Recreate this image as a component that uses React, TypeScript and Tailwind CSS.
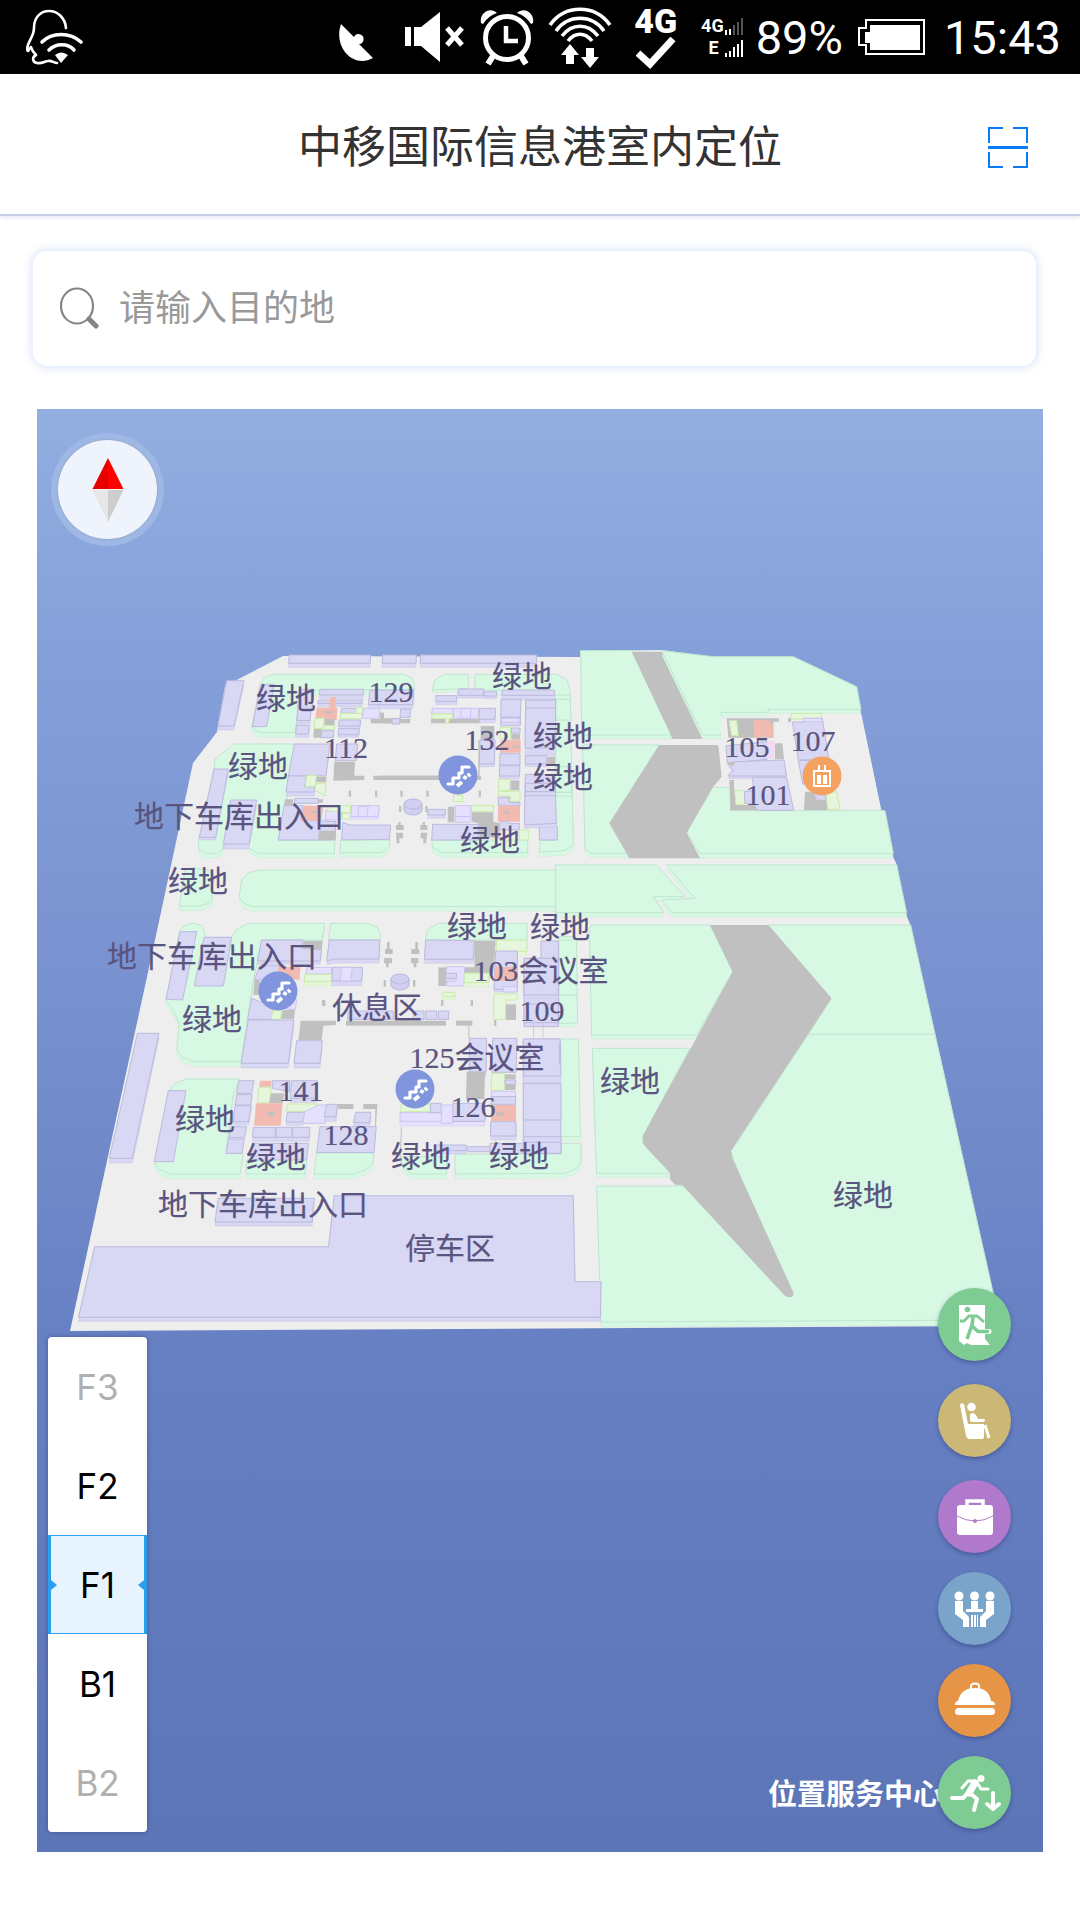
import React from "react";

type Kind = "g" | "p" | "r" | "l" | "v" | "k" | "e" | "m";
type Shape = [Kind, number, string];

const FILL: Record<Kind, string> = {
  g: "#d7f9e4",
  p: "#d8d7f4",
  r: "#f1bbb1",
  l: "#e6f6dc",
  v: "#e5e0fd",
  k: "#c0c0c0",
  e: "#eeeeee",
  m: "#f1daf2",
};
const EDGE: Record<Kind, string> = {
  g: "#bfe5cf",
  p: "#bcbade",
  r: "#f1bbb1",
  l: "#c8eda6",
  v: "#cbc4f2",
  k: "#c0c0c0",
  e: "#eeeeee",
  m: "#f1daf2",
};

const northWest: Shape[] = [
  ["p", 12, "688,45 932,45 930,70 686,70"],
  ["p", 12, "968,45 1069,45 1068,70 966,70"],
  ["p", 12, "1082,45 1430,45 1430,70 1080,70"],
  ["p", 12, "500,122 552,122 522,258 474,258"],
  ["g", 14, "575,262 602,130 615,112 640,103 1030,103 1055,113 1062,130 1062,150 770,150 740,150 720,160 706,278 600,278"],
  ["p", 0, "602,133 642,133 620,260 577,260"],
  ["p", 0, "718,148 762,148 756,205 712,205"],
  ["p", 10, "713,208 753,208 750,242 710,242"],
  ["p", 10, "709,256 748,256 746,282 707,282"],
  ["p", 10, "780,148 912,148 908,165 778,165"],
  ["p", 10, "775,180 908,180 905,190 773,190"],
  ["r", 0, "770,203 808,203 810,172 828,172 826,203 832,203 830,240 765,240"],
  ["k", 0, "795,213 815,213 815,221 795,221"],
  ["l", 0, "765,235 793,235 790,265 762,265"],
  ["k", 0, "793,237 824,237 824,257 793,257"],
  ["l", 0, "790,257 825,257 825,268 790,268"],
  ["k", 0, "762,267 785,267 783,293 760,293"],
  ["p", 0, "785,272 822,272 820,293 783,293"],
  ["p", 0, "845,205 890,205 888,220 843,220"],
  ["l", 0, "842,220 905,220 905,236 840,236"],
  ["l", 0, "890,203 910,203 908,220 888,220"],
  ["p", 8, "838,240 902,240 900,258 836,258"],
  ["p", 8, "836,266 898,266 896,284 834,284"],
  ["k", 0, "962,218 972,218 972,235 995,235 995,250 932,250 932,237 962,237"],
  ["p", 0, "995,235 1022,235 1020,250 995,250"],
  ["v", 0, "910,205 960,205 957,235 907,235"],
  ["p", 12, "930,150 1062,150 1058,194 925,194"],
  ["g", 14, "415,605 462,390 465,358 522,312 712,312 655,600 825,600 823,640 595,640 567,625 563,610 490,612 488,628 470,640 435,640 418,628"],
  ["p", 8, "462,387 505,387 467,592 418,592"],
  ["p", 15, "512,480 590,480 567,612 490,612"],
  ["p", 0, "703,312 810,312 798,408 685,408"],
  ["p", 12, "685,408 740,408 733,440 765,442 762,456 678,456"],
  ["l", 0, "740,407 770,407 765,440 735,440"],
  ["k", 0, "770,410 800,410 798,427 768,427"],
  ["l", 0, "768,430 798,430 795,468 765,450"],
  ["k", 0, "675,478 700,478 698,495 672,495"],
  ["p", 0, "705,475 775,475 775,490 703,490"],
  ["k", 0, "775,478 790,478 788,488 775,488"],
  ["p", 0, "672,497 730,497 722,540 828,545 825,600 655,600"],
  ["r", 0, "730,497 790,497 785,542 722,542"],
  ["k", 0, "755,513 772,513 772,520 755,520"],
  ["k", 0, "777,572 828,572 826,600 774,600"],
  ["v", 0, "798,510 845,510 843,540 795,540"],
  ["l", 0, "805,497 872,497 870,520 803,512"],
  ["l", 0, "848,520 872,520 870,537 845,537"],
  ["v", 8, "875,497 958,497 955,530 872,530"],
  ["v", 0, "897,500 925,500 920,530 894,530"],
  ["g", 14, "842,600 990,600 988,620 965,638 840,638"],
  ["p", 0, "848,547 870,555 992,555 988,598 845,600"],
  ["p", 0, "830,312 894,312 888,362 826,362"],
  ["k", 0, "823,365 885,365 883,407 913,407 913,420 820,422"],
  ["k", 0, "940,407 1262,407 1262,420 940,420"],
  ["k", 0, "866,452 873,452 873,470 866,470"],
  ["k", 0, "945,452 952,452 952,470 945,470"],
  ["g", 14, "538,770 545,720 565,698 600,690 1488,690 1488,800 575,800 548,788"],
  ["g", 14, "358,798 375,690 400,683 445,690 460,705 456,780 440,792 415,798"],
];

const northMid: Shape[] = [
  ["g", 8, "157,150 165,120 190,103 265,103 265,145"],
  ["g", 14, "285,103 530,103 560,118 570,150 580,615 555,632 478,636 480,600 525,600 525,165 365,150 285,150"],
  ["g", 0, "526,165 571,165 571,178 526,178"],
  ["g", 0, "526,178 571,178 573,240 526,240"],
  ["g", 0, "526,380 574,380 575,457 526,457"],
  ["g", 0, "526,457 576,457 576,468 526,468"],
  ["p", 8, "235,147 312,147 310,166 234,166"],
  ["p", 8, "312,155 350,155 350,168 312,168"],
  ["p", 10, "168,167 230,167 230,184 168,184"],
  ["v", 0, "157,205 220,205 218,222 155,222"],
  ["l", 0, "157,222 218,222 216,236 155,236"],
  ["v", 0, "222,205 295,205 293,235 220,235"],
  ["v", 0, "243,205 272,205 272,235 243,235"],
  ["k", 0, "153,237 302,237 302,250 153,250"],
  ["l", 0, "196,236 208,236 205,250 198,250"],
  ["p", 10, "298,205 347,205 345,238 298,238"],
  ["k", 0, "302,258 343,258 343,300 302,300"],
  ["k", 0, "295,300 299,300 299,407 295,407"],
  ["p", 8, "300,300 345,300 343,372 298,372"],
  ["k", 0, "0,407 303,407 303,420 0,420"],
  ["p", 14, "367,150 523,150 523,166 365,166"],
  ["p", 0, "363,178 423,178 421,232 362,232"],
  ["p", 0, "363,232 421,232 421,257 362,257"],
  ["v", 0, "364,235 418,235 418,247 364,247"],
  ["l", 0, "360,262 392,262 392,295 360,295"],
  ["p", 0, "394,264 420,264 420,279 394,279"],
  ["k", 0, "394,281 420,281 420,299 394,299"],
  ["r", 0, "362,300 422,300 422,338 360,338"],
  ["k", 0, "398,317 418,317 418,323 398,323"],
  ["p", 0, "360,341 420,341 420,375 359,375"],
  ["p", 8, "359,377 420,377 418,408 358,408"],
  ["l", 0, "357,418 390,418 388,452 355,452"],
  ["k", 0, "392,421 418,421 418,451 392,451"],
  ["l", 0, "356,454 420,454 420,484 390,484 390,468 356,468"],
  ["p", 0, "355,472 388,472 388,487 420,487 420,496 355,496"],
  ["r", 0, "355,497 420,497 420,545 353,545"],
  ["k", 0, "370,514 388,514 388,521 370,521"],
  ["p", 22, "437,180 527,180 527,324 435,324"],
  ["p", 0, "437,180 527,180 527,204 437,204"],
  ["p", 8, "436,347 500,347 500,372 436,372"],
  ["k", 0, "502,350 526,350 526,373 502,373"],
  ["e", 0, "434,383 524,383 524,402 434,402"],
  ["p", 0, "478,558 532,558 532,600 478,600"],
  ["p", 10, "436,403 525,405 529,550 433,555"],
  ["p", 0, "436,430 526,430 526,455 436,455"],
  ["p", 0, "436,455 527,455 527,467 435,467"],
  ["l", 0, "220,465 248,465 248,485 220,485"],
  ["p", 10, "143,508 197,508 195,525 143,525"],
  ["k", 0, "203,500 223,500 223,547 203,547"],
  ["v", 0, "226,497 273,497 272,530 226,530"],
  ["v", 0, "226,530 273,530 272,547 226,547"],
  ["l", 0, "275,497 341,497 340,515 275,515"],
  ["k", 0, "275,517 340,517 340,545 358,550 358,595 300,590 295,550 275,545"],
  ["p", 0, "360,547 375,543 390,550 418,550 418,570 358,570"],
  ["g", 14, "155,600 443,600 443,638 185,638 158,622"],
  ["l", 0, "418,570 445,570 445,600 418,600"],
  ["p", 0, "158,553 295,553 295,600 155,600"],
  ["k", 0, "300,550 350,550 352,592 298,590"],
  ["k", 0, "55,546 62,546 62,555 71,555 71,570 48,570 48,555 55,555"],
  ["k", 0, "48,578 69,578 69,595 58,595 58,610 50,610"],
  ["k", 0, "128,546 135,546 135,555 142,555 142,570 121,570 121,555 128,555"],
  ["k", 0, "122,578 142,578 138,610 130,610 130,595 122,595"],
  ["k", 0, "61,452 68,452 68,470 61,470"],
  ["k", 0, "139,452 146,452 146,470 139,470"],
  ["k", 0, "296,452 303,452 303,470 296,470"],
  ["k", 0, "57,498 64,498 64,516 57,516"],
  ["k", 0, "136,498 143,498 143,516 136,516"],
  ["p", 0, "62,207 92,207 90,232 60,232"],
  ["p", 0, "36,236 60,236 58,252 36,252"],
  ["k", 0, "0,218 12,218 12,237 35,237 35,250 0,250"],
  ["k", 0, "60,237 92,237 90,250 60,250"],
  ["g", 12, "602,32 755,32 878,285 605,285"],
  ["k", 0, "755,35 845,35 968,297 878,297"],
  ["g", 12, "608,315 838,315 690,550 748,640 630,640 615,625"],
  ["g", 14, "527,675 830,675 915,770 820,770 852,818 527,818"],
];

const northEast: Shape[] = [
  ["g", 12, "5,32 160,50 400,50 590,140 603,208 325,208 325,217 183,217 190,285 128,285"],
  ["e", 0, "183,230 326,230 326,222 604,222 664,511 190,511"],
  ["g", 14, "155,442 212,442 212,512 675,512 700,640 120,640 80,578"],
  ["k", 0, "-2,315 175,315 185,410 160,440 80,578 120,655 -92,655 -152,550"],
  ["g", 14, "20,675 710,675 740,818 37,818 5,780 105,775"],
  ["k", 0, "200,235 357,235 357,245 340,245 340,293 205,293"],
  ["l", 0, "207,242 230,242 235,287 215,287"],
  ["r", 0, "280,240 325,240 340,260 340,292 283,292"],
  ["p", 0, "198,317 325,305 322,358 202,370"],
  ["p", 8, "205,370 230,365 372,360 380,408 203,408 220,390"],
  ["k", 0, "203,368 222,366 224,376 203,376"],
  ["m", 0, "322,305 342,305 342,355 322,355"],
  ["k", 0, "345,310 367,310 372,358 345,358"],
  ["k", 0, "208,420 222,420 228,495 290,495 290,511 211,511"],
  ["e", 0, "222,422 275,422 275,448 222,448"],
  ["l", 0, "224,452 252,452 255,493 228,493"],
  ["p", 0, "278,412 380,412 401,511 290,511 285,493 255,490 253,454 280,452"],
  ["l", 0, "393,220 485,220 485,237 393,237"],
  ["k", 0, "384,234 393,234 393,246 384,246"],
  ["p", 0, "397,246 430,246 430,235 487,235 507,358 415,360"],
  ["p", 0, "415,362 508,360 515,430 428,432"],
  ["v", 0, "430,235 485,235 487,245 430,245"],
  ["k", 0, "435,455 458,455 470,480 500,482 503,510 432,510"],
  ["p", 0, "458,460 495,465 498,482 475,480"],
  ["l", 0, "498,460 530,455 540,507 503,508"],
];

const southWest: Shape[] = [
  ["g", 14, "318,362 358,155 370,138 400,130 428,138 437,172 515,172 530,148 565,130 795,130 785,180 605,180 580,300 543,545 400,545 365,532 350,510 358,430 345,400"],
  ["g", 0, "812,130 925,130 955,145 962,165 960,180 805,180"],
  ["p", 0, "360,155 410,155 368,360 318,358"],
  ["p", 0, "432,172 515,172 490,318 403,318"],
  ["p", 10, "605,180 728,180 728,205 785,210 780,243 592,243"],
  ["k", 0, "730,182 788,182 785,210 730,205"],
  ["p", 0, "600,257 660,257 650,300 583,300"],
  ["r", 0, "655,260 722,260 718,300 650,290"],
  ["k", 0, "583,300 600,300 600,345 580,345"],
  ["v", 0, "680,362 710,358 706,388 680,388"],
  ["p", 0, "575,355 640,380 635,418 563,418"],
  ["l", 0, "638,392 665,392 660,418 633,418"],
  ["k", 0, "668,390 705,390 702,417 663,417"],
  ["p", 14, "565,420 702,420 685,550 543,550"],
  ["k", 0, "722,422 828,422 828,435 790,437 785,480 715,480"],
  ["p", 14, "710,482 787,482 780,550 702,550"],
  ["p", 12, "808,180 960,180 957,237 825,237 800,243"],
  ["v", 0, "740,262 815,262 815,282 738,282"],
  ["l", 12, "735,283 818,283 815,305 732,305"],
  ["p", 14, "818,262 908,262 905,303 815,303"],
  ["v", 0, "845,262 877,262 872,303 840,303"],
  ["k", 0, "786,360 796,360 796,378 786,378"],
  ["k", 0, "858,422 1158,422 1158,437 858,437"],
  ["p", 0, "865,393 1000,393 1000,418 862,418"],
  ["p", 0, "1060,393 1092,393 1092,418 1060,418"],
  ["p", 0, "1097,393 1130,393 1130,418 1097,418"],
  ["p", 0, "1135,393 1166,393 1166,418 1135,418"],
  ["p", 14, "232,460 297,460 217,835 148,835"],
  ["g", 14, "283,845 330,630 345,610 380,597 540,597 520,640 498,818 550,820 540,882 330,882 298,868"],
  ["p", 0, "325,632 378,632 340,845 283,845"],
  ["p", 0, "537,602 582,602 575,640 530,640"],
  ["p", 0, "530,644 577,644 572,675 525,675"],
  ["p", 10, "525,677 574,677 566,725 520,725"],
  ["p", 0, "513,740 560,740 553,773 506,773"],
  ["p", 0, "505,777 553,777 546,820 498,820"],
  ["r", 0, "600,602 635,602 633,620 597,620"],
  ["l", 0, "597,622 633,622 628,668 592,668"],
  ["p", 0, "637,602 690,602 688,635 637,625"],
  ["k", 0, "633,640 672,640 668,670 628,670"],
  ["r", 0, "588,670 668,670 662,737 582,737"],
  ["k", 0, "623,695 645,695 645,706 623,706"],
  ["p", 12, "695,602 772,602 768,655 690,655"],
  ["l", 0, "682,672 770,672 768,694 680,694"],
  ["p", 10, "682,697 735,697 728,726 678,726"],
  ["v", 0, "735,695 775,675 800,675 795,730 728,730"],
  ["p", 14, "800,673 832,673 828,710 793,710"],
  ["k", 0, "833,672 880,672 880,687 833,687"],
  ["k", 0, "910,672 952,672 948,740 945,740 946,687 910,687"],
  ["p", 12, "887,697 932,697 930,728 880,728"],
  ["g", 14, "560,840 740,835 735,882 558,882"],
  ["p", 12, "580,742 647,742 645,772 578,772"],
  ["p", 12, "649,742 697,742 695,772 647,772"],
  ["p", 12, "699,742 750,742 748,772 697,772"],
  ["p", 0, "578,790 745,790 740,840 570,840"],
  ["g", 14, "770,818 942,818 938,850 915,870 885,882 762,882"],
  ["p", 0, "780,740 949,740 942,818 770,818"],
];

const southMid: Shape[] = [
  ["g", 0, "135,180 145,148 175,130 442,130 440,180"],
  ["p", 12, "137,180 283,182 280,238 133,238"],
  ["l", 12, "350,180 442,180 440,215 350,215"],
  ["k", 0, "283,182 347,182 345,215 340,278 253,278 253,262 283,262"],
  ["p", 8, "347,213 412,213 412,328 342,328"],
  ["r", 0, "345,260 411,260 411,302 342,302"],
  ["k", 0, "175,262 198,262 198,318 175,318"],
  ["v", 0, "200,260 254,260 252,318 200,318"],
  ["p", 10, "197,280 230,280 228,295 197,295"],
  ["l", 12, "253,280 328,280 326,308 253,308"],
  ["v", 0, "370,320 411,320 411,336 370,336"],
  ["l", 0, "342,342 411,342 411,360 378,360 376,418 340,418"],
  ["k", 0, "378,373 408,373 408,420 378,420"],
  ["g", 10, "537,170 587,170 593,425 580,430 537,430"],
  ["g", 0, "537,180 589,180 592,345 537,345"],
  ["p", 0, "483,183 535,183 535,440 432,440 432,235 483,235"],
  ["p", 10, "432,235 535,235 535,345 432,345"],
  ["p", 0, "432,372 535,372 535,428 432,428"],
  ["l", 8, "187,337 224,337 224,350 187,350"],
  ["k", 0, "21,186 29,186 29,207 38,207 38,222 15,222 15,207 21,207"],
  ["k", 0, "12,234 36,234 36,250 26,250 26,262 18,262 18,250 12,250"],
  ["k", 0, "106,186 114,186 114,207 118,207 118,222 94,222 94,207 106,207"],
  ["k", 0, "93,234 115,234 115,250 109,250 109,262 101,262 101,250 93,250"],
  ["k", 0, "11,300 18,300 18,320 11,320"],
  ["k", 0, "99,300 106,300 106,320 99,320"],
  ["k", 0, "183,360 190,360 190,378 183,378"],
  ["k", 0, "272,360 279,360 279,378 272,378"],
  ["k", 0, "342,420 349,420 349,438 342,438"],
  ["k", 0, "228,422 277,422 277,437 228,437"],
  ["k", 0, "265,437 268,437 268,475 265,475"],
  ["k", 0, "459,430 461,430 461,473 459,473"],
  ["k", 0, "488,430 490,430 490,473 488,473"],
  ["p", 12, "268,475 320,475 318,576 268,576"],
  ["k", 0, "260,575 315,575 313,658 258,658"],
  ["p", 0, "338,475 411,475 408,577 336,577"],
  ["l", 0, "335,580 373,580 373,630 333,630"],
  ["k", 0, "375,583 407,583 407,598 375,598"],
  ["p", 0, "375,600 407,600 407,613 375,613"],
  ["k", 0, "375,614 407,614 407,630 375,630"],
  ["v", 0, "335,634 407,634 407,650 333,650"],
  ["p", 0, "335,650 407,650 407,673 333,673"],
  ["r", 0, "333,675 408,675 408,723 333,723"],
  ["k", 0, "350,697 372,697 372,707 350,707"],
  ["p", 12, "332,725 408,725 408,768 332,768"],
  ["g", 12, "540,477 595,477 601,770 540,770"],
  ["g", 14, "543,790 603,790 603,845 590,865 555,880 225,882 225,822 543,822"],
  ["g", 14, "62,830 200,830 200,882 95,882 70,865"],
  ["p", 10, "165,795 258,795 258,812 165,812"],
  ["p", 0, "262,800 330,800 330,815 262,815"],
  ["p", 0, "330,790 543,790 543,820 330,820"],
  ["p", 0, "430,477 540,477 543,820 430,820"],
  ["p", 22, "430,477 540,477 543,588 430,588"],
  ["p", 0, "430,610 543,610 543,720 430,720"],
  ["p", 0, "430,770 543,770 543,787 430,787"],
  ["p", 0, "538,497 542,497 542,553 538,553"],
  ["k", 0, "63,742 66,742 62,830 59,830"],
  ["l", 0, "64,672 150,672 150,695 62,695"],
  ["v", 14, "60,698 315,698 313,724 60,724"],
  ["p", 0, "152,670 184,670 184,698 152,698"],
  ["p", 0, "218,670 315,670 315,724 218,724"],
  ["v", 0, "184,675 218,675 218,730 184,730"],
];

const southEast: Shape[] = [
  ["g", 12, "88,85 94,75 450,75 518,215 410,405 95,405"],
  ["g", 0, "625,75 1052,75 1125,403 745,403 812,295"],
  ["g", 12, "97,445 390,445 248,710 330,820 110,820"],
  ["g", 15, "110,858 370,858 680,1188 512,755 745,403 1125,403 1318,1260 123,1266"],
  ["k", 0, "450,75 625,75 815,295 513,752 517,775 698,1172 701,1184 694,1191 683,1191 673,1186 368,856 345,854 330,838 330,818 260,745 248,728 248,708 518,215"],
];

const parking: Shape[] = [
  ["p", 12, "443,235 712,235 706,306 434,306"],
  ["p", 12, "97,380 752,380 768,227 1437,227 1442,485 1515,485 1513,592 52,592"],
];

function Blocks({ shapes, transform }: { shapes: Shape[]; transform: string }) {
  return (
    <g transform={transform} strokeWidth={3} strokeLinejoin="round">
      {shapes.map(([kind, depth, points], i) => (
        <g key={i} fill={FILL[kind]} stroke={EDGE[kind]}>
          {depth > 0 && (
            <g transform={`translate(0 ${depth})`} strokeWidth={1}>
              <polygon points={points} />
            </g>
          )}
          <polygon points={points} strokeWidth={kind === "k" || kind === "e" || kind === "r" ? 0 : 3} />
        </g>
      ))}
    </g>
  );
}

const labels: [string, number, number][] = [
  ["绿地", 286, 699],
  ["129", 391, 693],
  ["绿地", 522, 677],
  ["112", 346, 749],
  ["132", 487, 741],
  ["绿地", 563, 737],
  ["绿地", 563, 778],
  ["绿地", 258, 767],
  ["地下车库出入口", 239, 817],
  ["绿地", 490, 841],
  ["绿地", 198, 882],
  ["105", 747, 748],
  ["107", 813, 742],
  ["101", 768, 796],
  ["地下车库出入口", 212, 957],
  ["绿地", 212, 1020],
  ["141", 301, 1092],
  ["绿地", 205, 1120],
  ["128", 346, 1136],
  ["绿地", 276, 1158],
  ["绿地", 477, 927],
  ["绿地", 560, 928],
  ["103会议室", 541, 971],
  ["休息区", 377, 1008],
  ["109", 542, 1012],
  ["125会议室", 477, 1058],
  ["绿地", 630, 1082],
  ["126", 473, 1108],
  ["绿地", 421, 1157],
  ["绿地", 519, 1157],
  ["绿地", 863, 1196],
  ["地下车库出入口", 263, 1205],
  ["停车区", 450, 1249],
];

function StairsPin({ x, y }: { x: number; y: number }) {
  return (
    <g transform={`translate(${x} ${y})`}>
      <circle r="19.5" fill="#8195de" />
      <path
        d="M-10 9H-5V3H1V-2H4V-8H11"
        fill="none"
        stroke="#fff"
        strokeWidth="3.2"
        strokeLinecap="round"
        strokeLinejoin="round"
      />
      <path d="M-1 11L4 7M6 4L8 1M10 1L12 -1" fill="none" stroke="#fff" strokeWidth="4" />
    </g>
  );
}

function CampusMap() {
  return (
    <svg viewBox="37 409 1006 1443" className="block h-auto w-full" role="img" aria-label="室内地图">
      <defs>
        <linearGradient id="sky" x1="0" y1="0" x2="0" y2="1">
          <stop offset="0" stopColor="#93aee0" />
          <stop offset="0.17" stopColor="#84a0d9" />
          <stop offset="0.36" stopColor="#7b94d1" />
          <stop offset="0.65" stopColor="#6680c3" />
          <stop offset="1" stopColor="#5c75b7" />
        </linearGradient>
      </defs>
      <rect x="37" y="409" width="1006" height="1443" fill="url(#sky)" />
      <polygon
        fill="#eeeeee"
        points="283,656 580,657 580,651 662,650 713,657 793,657 857,687 861,715 881,810 885,812 893,857 897,865 907,917 910,924 935,1033 993,1293 999,1326 70,1331 155,940 193,763 217,732 225,686"
      />
      <Blocks shapes={northWest} transform="translate(60 640) scale(0.33333)" />
      <Blocks shapes={northMid} transform="translate(380 640) scale(0.33333)" />
      <Blocks shapes={northEast} transform="translate(660 640) scale(0.33333)" />
      <Blocks shapes={southWest} transform="translate(60 880) scale(0.33333)" />
      <Blocks shapes={southMid} transform="translate(380 880) scale(0.33333)" />
      <Blocks shapes={southEast} transform="translate(560 900) scale(0.33333)" />
      <Blocks shapes={parking} transform="translate(60 1120) scale(0.35714 0.33333)" />
      {[
        [413, 805],
        [400, 980],
      ].map(([x, y]) => (
        <g key={y} fill="#d0cff0" stroke="#b9b7de">
          <path d={`M${x - 9} ${y - 1}v6a9 5 0 0 0 18 0v-6z`} />
          <ellipse cx={x} cy={y - 1} rx="9" ry="5" />
        </g>
      ))}
      <g
        textAnchor="middle"
        fontSize="30"
        fill="#5a5480"
        stroke="#5a5480"
        strokeWidth="0.2"
        className="font-['Liberation_Serif','Noto_Sans_CJK_SC',serif]"
      >
        {labels.map(([text, x, y], i) => (
          <text key={i} x={x} y={y + (/^\d+$/.test(text) ? 9 : 10)}>
            {text}
          </text>
        ))}
      </g>
      <StairsPin x={458} y={775} />
      <StairsPin x={278} y={991} />
      <StairsPin x={415} y={1089} />
      <g transform="translate(822 776)">
        <circle r="19.5" fill="#f3a25f" />
        <g fill="none" stroke="#fff" strokeWidth="2">
          <rect x="-8" y="-5" width="16" height="15" />
          <path d="M-3 -11v5M3 -11v5" />
          <path d="M-3 -1v9M3 -1v9" strokeWidth="4" />
        </g>
      </g>
      <text
        x="768"
        y="1805"
        fontSize="29"
        fontWeight="700"
        fill="#fff"
        className="font-['Noto_Sans_CJK_SC',sans-serif]"
      >
        位置服务中心
      </text>
    </svg>
  );
}

function StatusBar() {
  return (
    <div className="flex h-[74px] items-center bg-black pr-[19px] pl-[26px] font-['Roboto',sans-serif] text-white">
      <svg width="58" height="56" viewBox="0 0 58 56" fill="none" stroke="#fff" strokeWidth="2.6" strokeLinecap="round" strokeLinejoin="round">
        <path d="M40 19C39 9 32 2 23 2C14 2 8 9 8 19C8 26 4 30 2 36C1 39 1 42 2 42L5 38C6 42 8 44 10 46C6 48 6 53 11 54C16 55 19 52 22 52C25 51 28 54 31 54" />
        <path d="M16 33C26 23 44 23 55 33M23 41C30 34 42 34 48 41" strokeWidth="3.6" />
        <path d="M29 46Q35 41 42 46L35 54Z" fill="#fff" stroke="none" />
      </svg>
      <div className="ml-auto flex items-center">
        <svg width="38" height="60" viewBox="0 0 38 60" fill="#fff">
          <path d="M4 17C-4 40 16 62 36 51L22 37A5 5 0 1 0 17 30Z" />
        </svg>
        <svg className="ml-[29px]" width="62" height="60" viewBox="0 0 62 60" fill="#fff">
          <path d="M1 20h6v19H1zM10 20h7L36 5v50L17 39h-7z" />
          <path d="M43 21l15 17M58 21L43 38" stroke="#fff" strokeWidth="5" />
        </svg>
        <svg className="ml-[13px]" width="56" height="60" viewBox="0 0 56 60" fill="none" stroke="#fff">
          <circle cx="28" cy="31" r="21.5" strokeWidth="5" />
          <path d="M27 19v15h12" strokeWidth="4.5" />
          <path d="M14 49l-5 8M42 49l5 8" strokeWidth="6" />
          <path d="M2 16C0 6 11 -1 18 6Q9 9 4 17ZM54 16C56 6 45 -1 38 6Q47 9 52 17Z" fill="#fff" stroke="none" />
        </svg>
        <svg className="ml-[13px]" width="64" height="62" viewBox="0 0 64 62" fill="none" stroke="#fff" strokeWidth="3.6">
          <path d="M2 19C17 -2 47 -2 62 19M8 25C20 8 44 8 56 25M14 30C24 17 40 17 50 30M20 35C27 26 37 26 44 35" />
          <path d="M22 38l9 11h-5v9h-8v-9h-5zM42 62l-9-11h5v-9h8v9h5z" fill="#fff" stroke="none" />
        </svg>
        <div className="ml-[22px] flex flex-col items-center">
          <span className="text-[34px] leading-[31px] font-black">4G</span>
          <svg width="40" height="32" viewBox="0 0 40 32" fill="none" stroke="#fff" strokeWidth="7">
            <path d="M2 16L14 27L37 2" />
          </svg>
        </div>
        <div className="ml-[24px] flex flex-col items-end gap-[2px] text-[18px] leading-[20px] font-bold">
          <div className="flex items-center">
            <span>4G</span>
            <svg width="20" height="17" viewBox="0 0 20 17">
              <path d="M1 12h2v5h-2zM5 11h2v6h-2z" fill="#fff" />
              <path d="M9 7h2v10h-2zM13 4h2v13h-2zM17 0h2v17h-2z" fill="#555" />
            </svg>
          </div>
          <div className="flex items-center gap-[5px]">
            <span>E</span>
            <svg width="20" height="17" viewBox="0 0 20 17" fill="#fff">
              <path d="M1 13h2v4h-2zM5 11h2v6h-2zM9 7h2v10h-2zM13 4h2v13h-2zM17 0h2v17h-2z" />
            </svg>
          </div>
        </div>
        <span className="ml-[12px] pt-[2px] text-[47px] leading-[56px]">89%</span>
        <svg className="ml-[15px]" width="68" height="36" viewBox="0 0 68 36">
          <path d="M8 1h58v34H8v-9H1V9h7z" fill="none" stroke="#fff" strokeWidth="2" />
          <path d="M12 6h50v25H12v-7H7V13h5z" fill="#fff" />
        </svg>
        <span className="ml-[18px] pt-[2px] text-[47px] leading-[56px]">15:43</span>
      </div>
    </div>
  );
}

const facilities: { label: string; style: string; icon: React.ReactNode }[] = [
  {
    label: "安全出口",
    style: "bg-[#7ecb94]",
    icon: (
      <>
        <path d="M21 17H47V51L52 57H33L29 55 26 57 21 53Z" fill="#fff" />
        <path d="M38 43.500H51" stroke="#fff" strokeWidth="5" strokeLinecap="round" />
        <circle cx="29.500" cy="21.500" r="2.800" fill="#7ecb94" />
        <path d="M22 33H26L31 28H39L46 34" fill="none" stroke="#7ecb94" strokeWidth="2.800" />
        <path d="M35 29L34 38L40 43.500H51M34 37L29 51" fill="none" stroke="#7ecb94" strokeWidth="3.600" />
      </>
    ),
  },
  {
    label: "休息座椅",
    style: "bg-[#cbb877]",
    icon: (
      <g fill="#fff">
        <circle cx="33.500" cy="23" r="4.300" />
        <path d="M22 21Q23 18 26 20L30 40H46V53Q46 55 44 55H31Q29 55 28 52Z" />
        <path d="M32 37V31Q34 27 38 31L40 35H46Q48 36 46 38L34 38Z" />
        <path d="M47 41L51 54" stroke="#fff" strokeWidth="3" />
      </g>
    ),
  },
  {
    label: "办公区",
    style: "bg-[#b079cc]",
    icon: (
      <>
        <path d="M29 27V21H45V27" fill="none" stroke="#fff" strokeWidth="3.500" />
        <rect x="19" y="25" width="36" height="30" rx="3" fill="#fff" />
        <path d="M19 36Q37 46 55 36" fill="none" stroke="#b079cc" />
        <circle cx="37" cy="41" r="2" fill="#b079cc" />
      </>
    ),
  },
  {
    label: "会议室",
    style: "bg-[#7ba4cb]",
    icon: (
      <g fill="#fff">
        <circle cx="21" cy="24" r="4.500" />
        <circle cx="36.500" cy="24" r="4.500" />
        <circle cx="52" cy="24" r="4.500" />
        <path d="M17 29H25V39L31 45V55H25V48L17 42ZM56 29H48V39L42 45V55H48V48L56 42ZM33 29h7v8h5v3H28v-3h5zM33 43h2v12h-2zM36 43h2v12h-2zM39 43h1v12h-1z" />
      </g>
    ),
  },
  {
    label: "餐厅",
    style: "bg-[#e69547]",
    icon: (
      <g fill="#fff">
        <path d="M33 25V22Q33 19.500 37 19.500T41 22V25" fill="none" stroke="#fff" strokeWidth="2" />
        <path d="M20 37Q23 24 37 24T53 37Q57 37 57 41H17Q17 37 20 37Z" />
        <rect x="17" y="44" width="40" height="7" rx="3.500" />
      </g>
    ),
  },
  {
    label: "疏散路线",
    style: "bg-[#7ecb94]",
    icon: (
      <g fill="none" stroke="#fff" strokeLinecap="round" strokeLinejoin="round">
        <circle cx="43" cy="22.500" r="3.500" fill="#fff" stroke="none" />
        <path d="M24 32L30 25H38L43 33H50" strokeWidth="3" />
        <path d="M37 27L31 37" strokeWidth="7" />
        <path d="M30 37L25 42H14M33 38L39 43L36 54" strokeWidth="4" />
        <path d="M55 37V53M49 48L55 53L61 48" strokeWidth="4" />
      </g>
    ),
  },
];

function FacilityButton({ index }: { index: number }) {
  const { label, style, icon } = facilities[index];
  return (
    <button
      type="button"
      aria-label={label}
      className={`size-[73px] rounded-full shadow-[0_2px_4px_rgba(40,50,110,0.45)] ${style}`}
    >
      <svg viewBox="0 0 73 73" className="size-full">
        {icon}
      </svg>
    </button>
  );
}

const floors = [
  { name: "F3", look: "text-[#b0b0b0]" },
  { name: "F2", look: "text-black" },
  { name: "F1", look: "border-x-[3px] border-y border-[#2b9fee] bg-[#e8f4fd] text-black" },
  { name: "B1", look: "text-black" },
  { name: "B2", look: "text-[#b0b0b0]" },
];

export default function App() {
  return (
    <div className="min-h-screen bg-white pb-[68px] font-['Noto_Sans_CJK_SC',sans-serif]">
      <StatusBar />
      <header className="grid h-[142px] grid-cols-[1fr_auto_1fr] items-center border-b-2 border-[#c9cde3] px-[52px] shadow-[0_2px_4px_rgba(180,185,215,0.3)]">
        <h1 className="col-start-2 text-[44px] leading-[60px] text-[#333333]">中移国际信息港室内定位</h1>
        <button type="button" aria-label="扫一扫" className="mt-[6px] justify-self-end">
          <svg width="40" height="41" viewBox="0 0 40 41" fill="none" stroke="#087cf6" strokeWidth="2">
            <path d="M15 1H1V16M25 1H39V16M15 40H1V25M25 40H39V25" />
            <path d="M0 20.500H40" strokeWidth="3" />
          </svg>
        </button>
      </header>

      <main>
        <div className="mt-[35px] mr-[44px] ml-[33px] flex h-[115px] items-center gap-[20px] rounded-[14px] bg-white px-[27px] pb-[2px] shadow-[0_0_8px_2px_rgba(205,222,245,0.75)]">
          <svg width="39" height="42" viewBox="0 0 39 42" fill="none" stroke="#858585" className="shrink-0">
            <ellipse cx="17" cy="19" rx="16" ry="17.500" strokeWidth="2.200" />
            <path d="M29 32L36 39" strokeWidth="5" strokeLinecap="round" />
          </svg>
          <input
            type="text"
            aria-label="目的地"
            placeholder="请输入目的地"
            className="min-w-0 flex-1 bg-transparent pb-[6px] text-[36px] leading-[52px] text-[#333333] outline-none placeholder:text-[#999999]"
          />
        </div>

        <section className="relative mx-[37px] mt-[43px]">
          <CampusMap />

          <button
            type="button"
            aria-label="指北针"
            className="absolute top-[24px] left-[14px] flex size-[113px] items-center justify-center rounded-full bg-[#9fb7e5]"
          >
            <span className="flex size-[99px] items-center justify-center rounded-full bg-[#eff4fc] shadow-[0_0_2px_#8b93ad]">
              <svg width="32" height="64" viewBox="0 0 32 66">
                <path d="M16 0L0 32H16Z" fill="#e60000" />
                <path d="M16 0L32 32H16Z" fill="#ff0000" />
                <path d="M0 33H16V66Z" fill="#e6e6e6" />
                <path d="M32 33H16V66Z" fill="#cdcdcd" />
              </svg>
            </span>
          </button>

          <div className="absolute bottom-[20px] left-[11px] flex w-[99px] flex-col overflow-hidden rounded-[4px] bg-white font-['Inter',sans-serif] shadow-[0_0_4px_rgba(40,50,110,0.5)]">
            {floors.map(({ name, look }) => (
              <button
                key={name}
                type="button"
                aria-pressed={name === "F1"}
                className={`flex h-[99px] items-center justify-center text-[35px] leading-[40px] ${look}`}
              >
                {name === "F1" ? (
                  <span className="flex w-full items-center justify-between">
                    <svg width="6" height="10" viewBox="0 0 6 10" fill="#2b9fee">
                      <path d="M0 0L6 5L0 10Z" />
                    </svg>
                    {name}
                    <svg width="6" height="10" viewBox="0 0 6 10" fill="#2b9fee">
                      <path d="M6 0L0 5L6 10Z" />
                    </svg>
                  </span>
                ) : (
                  name
                )}
              </button>
            ))}
          </div>

          <div className="absolute right-[32px] bottom-[23px] flex flex-col gap-[19px]">
            <div className="flex flex-col gap-[23px]">
              <FacilityButton index={0} />
              <FacilityButton index={1} />
              <FacilityButton index={2} />
            </div>
            <FacilityButton index={3} />
            <FacilityButton index={4} />
            <FacilityButton index={5} />
          </div>
        </section>
      </main>
    </div>
  );
}
